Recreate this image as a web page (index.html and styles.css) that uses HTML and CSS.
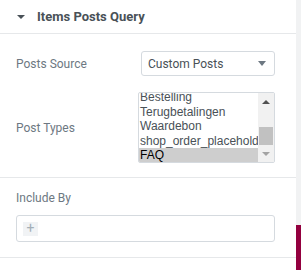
FILE: index.html
```html
<html>
<head>
<title>Items Posts Query</title>
<link rel="stylesheet" href="styles.css">
</head>
<body>
<div class="page">
  <div class="panel">
    <div class="head">
      <span class="caret"></span>
      <span class="title">Items Posts Query</span>
    </div>

    <div class="section">
      <div class="row">
        <span class="label">Posts Source</span>
        <div class="select">
          <span>Custom Posts</span>
          <span class="arrow"></span>
        </div>
      </div>
      <div class="row types">
        <span class="label">Post Types</span>
        <div class="multi">
          <div class="options">
            <div class="opt first">Bestelling</div>
            <div class="opt">Terugbetalingen</div>
            <div class="opt">Waardebon</div>
            <div class="opt">shop_order_placehold</div>
            <div class="opt picked">FAQ</div>
          </div>
          <div class="scroll">
            <span class="up"></span>
            <span class="thumb"></span>
            <span class="down"></span>
          </div>
        </div>
      </div>
    </div>

    <div class="section include">
      <div class="label">Include By</div>
      <div class="tags">
        <span class="add">+</span>
      </div>
    </div>
  </div>
  <div class="side">
    <div class="mark"></div>
  </div>
</div>
</body>
</html>
```

FILE: styles.css
```css
* {
  box-sizing: border-box;
}

body {
  margin: 0;
  font-family: Roboto, "Noto Sans", sans-serif;
  background: #fff;
}

.page {
  display: flex;
  height: 270px;
}

.panel {
  width: 296px;
  background: #fff;
}

.side {
  flex: 1;
  background: #f1f2f3;
  display: flex;
  flex-direction: column;
  justify-content: flex-end;
}

.mark {
  height: 45px;
  background: #93003f;
}

.head {
  height: 34px;
  border-bottom: 1px solid #e6e8ea;
  display: flex;
  align-items: center;
  padding-left: 17px;
}

.caret {
  width: 0;
  height: 0;
  border-left: 4px solid transparent;
  border-right: 4px solid transparent;
  border-top: 4px solid #495157;
  margin-right: 12px;
}

.title {
  font-size: 13px;
  font-weight: bold;
  color: #495157;
}

.section {
  padding: 17px 21px 0 16px;
  border-bottom: 1px solid #e6e8ea;
  height: 144px;
}

.row {
  display: flex;
  align-items: center;
  justify-content: space-between;
}

.label {
  font-size: 12px;
  color: #6d7882;
}

.select {
  width: 134px;
  height: 25px;
  border: 1px solid #d5dadf;
  border-radius: 3px;
  display: flex;
  align-items: center;
  justify-content: space-between;
  padding: 0 8px 0 6px;
  font-size: 12px;
  color: #495157;
}

.arrow {
  border-left: 4px solid transparent;
  border-right: 4px solid transparent;
  border-top: 5px solid #6d7882;
}

.types {
  margin-top: 16px;
}

.multi {
  width: 137px;
  height: 71px;
  border: 1px solid #d5dadf;
  border-radius: 2px;
  display: flex;
  overflow: hidden;
}

.options {
  flex: 1;
  overflow: hidden;
  font-family: "Liberation Sans", Arial, sans-serif;
  font-size: 12px;
  color: #495157;
}

.opt {
  height: 14.5px;
  line-height: 14.5px;
  padding-left: 1px;
  white-space: nowrap;
}

.opt.first {
  margin-top: -3px;
}

.opt.picked {
  height: 16px;
  background: #cecece;
  color: #000;
}

.scroll {
  width: 16px;
  background: #f1f1f1;
  display: flex;
  flex-direction: column;
  align-items: center;
}

.up {
  margin-top: 7px;
  border-left: 4px solid transparent;
  border-right: 4px solid transparent;
  border-bottom: 4px solid #505050;
}

.thumb {
  width: 14px;
  height: 18px;
  margin-top: 23px;
  background: #c1c1c1;
}

.down {
  margin-top: 7px;
  border-left: 4px solid transparent;
  border-right: 4px solid transparent;
  border-top: 4px solid #a3a3a3;
}

.include {
  height: 80px;
  padding-top: 13px;
}

.tags {
  margin-top: 10px;
  height: 27px;
  border: 1px solid #d5dadf;
  border-radius: 3px;
  padding: 6px;
}

.add {
  display: inline-block;
  width: 15px;
  height: 14px;
  background: #f1f3f5;
  color: #a4afb7;
  font-size: 14px;
  line-height: 13px;
  text-align: center;
}
```
